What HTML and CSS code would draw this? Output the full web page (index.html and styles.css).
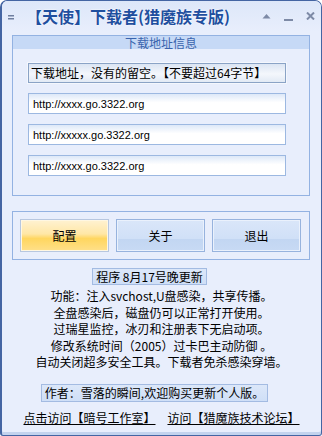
FILE: index.html
```html
<html><head>
<meta charset="utf-8">
<meta name="viewport" content="width=device-width, initial-scale=1">
<title>【天使】下载者(猎魔族专版)</title>
<link rel="stylesheet" href="styles.css">
</head>
<body>
  <div class="window">
    <header class="titlebar">
      <svg class="sys-icon" width="6" height="5" viewBox="0 0 6 5">
        <rect x="0" y="0" width="6" height="1.5" fill="#6f7f9f"/>
        <rect x="0" y="3" width="6" height="1.5" fill="#6f7f9f"/>
      </svg>
      <div class="title">【天使】下载者(猎魔族专版)</div>
      <div class="win-buttons">
        <svg width="9" height="6" viewBox="0 0 9 6"><path d="M0.5 5.5 L4.5 1 L8.5 5.5 Z" fill="#7d8aa6"/></svg>
        <svg width="9" height="3" viewBox="0 0 9 3" class="btn-min"><rect x="0" y="0" width="9" height="2" fill="#7d8aa6"/></svg>
        <svg width="9" height="8" viewBox="0 0 9 8"><path d="M1 0.5 L8 7.5 M8 0.5 L1 7.5" stroke="#7d8aa6" stroke-width="2"/></svg>
      </div>
    </header>

    <section class="group addr-group">
      <div class="group-title">下载地址信息</div>
      <div class="group-body">
        <div class="hint">下载地址，没有的留空。【不要超过64字节】</div>
        <input class="url" type="text" value="http://xxxx.go.3322.org">
        <input class="url" type="text" value="http://xxxxx.go.3322.org">
        <input class="url" type="text" value="http://xxxx.go.3322.org">
      </div>
    </section>

    <section class="group btn-group">
      <button class="btn btn-active">配置</button>
      <button class="btn">关于</button>
      <button class="btn">退出</button>
    </section>

    <div class="info">
      <div class="tag version">程序 8月17号晚更新</div>
      <p class="desc">
        功能：注入svchost,U盘感染，共享传播。<br>
        全盘感染后，磁盘仍可以正常打开使用。<br>
        过瑞星监控，冰刃和注册表下无启动项。<br>
        修改系统时间（2005）过卡巴主动防御 。<br>
        自动关闭超多安全工具。下载者免杀感染穿墙。
      </p>
      <div class="tag author">作者：雪落的瞬间,欢迎购买更新个人版。</div>
      <div class="links">
        <a href="#">点击访问【暗号工作室】</a>
        <a href="#">访问【猎魔族技术论坛】</a>
      </div>
    </div>
  </div>
</body>
</html>
```

FILE: styles.css
```css
body, html {
  margin: 0;
  padding: 0;
  background-color: #fff;
  font-family: "Noto Sans CJK SC", "Liberation Sans", sans-serif;
  font-size: 12px;
  color: #000;
}
.window {
  width: 322px;
  height: 436px;
  box-sizing: border-box;
  border: 1px solid #4465a3;
  border-left-width: 2px;
  border-radius: 7px 7px 3px 3px;
  background-color: #e8eefc;
  box-shadow: inset 0 -3px 0 #c3d3ee;
  overflow: hidden;
}
.titlebar {
  height: 30px;
  display: flex;
  align-items: center;
  padding: 0 6px 0 6px;
  background: linear-gradient(#dde7f9, #e8eefc);
}
.sys-icon {
  margin-top: 2px;
}
.title {
  margin-left: 12px;
  font-size: 16px;
  font-weight: bold;
  color: #1f4f9f;
  text-shadow: 0 0 2px #fff, 0 0 1px #fff;
  white-space: nowrap;
}
.win-buttons {
  margin-left: auto;
  display: flex;
  align-items: center;
  gap: 13px;
}
.btn-min {
  margin-top: 8px;
}
.group {
  margin: 4px 11px 0 10px;
  border: 1px solid #93b2e2;
  background-color: #e8eefc;
}
.group-title {
  height: 13px;
  line-height: 13px;
  background-color: #c6d9f6;
  color: #3a64ad;
  text-align: center;
}
.group-body {
  display: flex;
  flex-direction: column;
  gap: 10px;
  padding: 14px 23px 19px 15px;
}
.hint {
  height: 20px;
  line-height: 18px;
  box-sizing: border-box;
  padding-left: 2px;
  border: 1px solid #8aa3c6;
  box-shadow: 0 0 0 1px #f4f7fd;
  background: linear-gradient(#dbe5f3, #f4f7fc 55%, #e2eaf5);
  white-space: nowrap;
}
.url {
  height: 21px;
  box-sizing: border-box;
  margin: 0;
  padding: 0 4px;
  border: 1px solid #9cb8e1;
  background: linear-gradient(#dde8f8, #fff 45%);
  font-family: "Liberation Sans", sans-serif;
  font-size: 11px;
  color: #000;
  outline: none;
}
.btn-group {
  margin-top: 15px;
  display: flex;
  gap: 7px;
  padding: 7px 8px 7px 7px;
}
.btn {
  width: 89px;
  height: 33px;
  margin: 0;
  padding: 0;
  border: 1px solid #97b3de;
  box-shadow: inset 0 0 0 1px #eaf1fc;
  background: linear-gradient(#dae6f9, #d0e0f7 60%, #c2d6f2 60%, #c8daf4);
  font-family: "Noto Sans CJK SC", sans-serif;
  font-size: 12px;
  color: #000;
}
.btn-active {
  border-color: #b7c7e0;
  box-shadow: inset 0 0 0 1px #fff7e2;
  background: linear-gradient(#fff2d2, #ffe7a6 45%, #ffd65f 60%, #ffe08a);
}
.info {
  display: flex;
  flex-direction: column;
  align-items: center;
  margin-top: 8px;
}
.tag {
  height: 17px;
  line-height: 15px;
  box-sizing: border-box;
  padding: 0 3px;
  border: 1px solid #a3bbe2;
  background: linear-gradient(#dce7f9, #cfdff7);
  white-space: nowrap;
}
.version {
  margin-right: 24px;
}
.desc {
  margin: 3px 0 0 0;
  line-height: 16.5px;
  text-align: center;
  white-space: nowrap;
}
.author {
  margin-top: 13px;
  margin-right: 14px;
  height: 18px;
  line-height: 16px;
}
.links {
  margin-top: 8px;
  display: flex;
  gap: 12px;
  line-height: 16px;
}
.links a {
  color: #000;
  text-decoration: underline;
}
```
